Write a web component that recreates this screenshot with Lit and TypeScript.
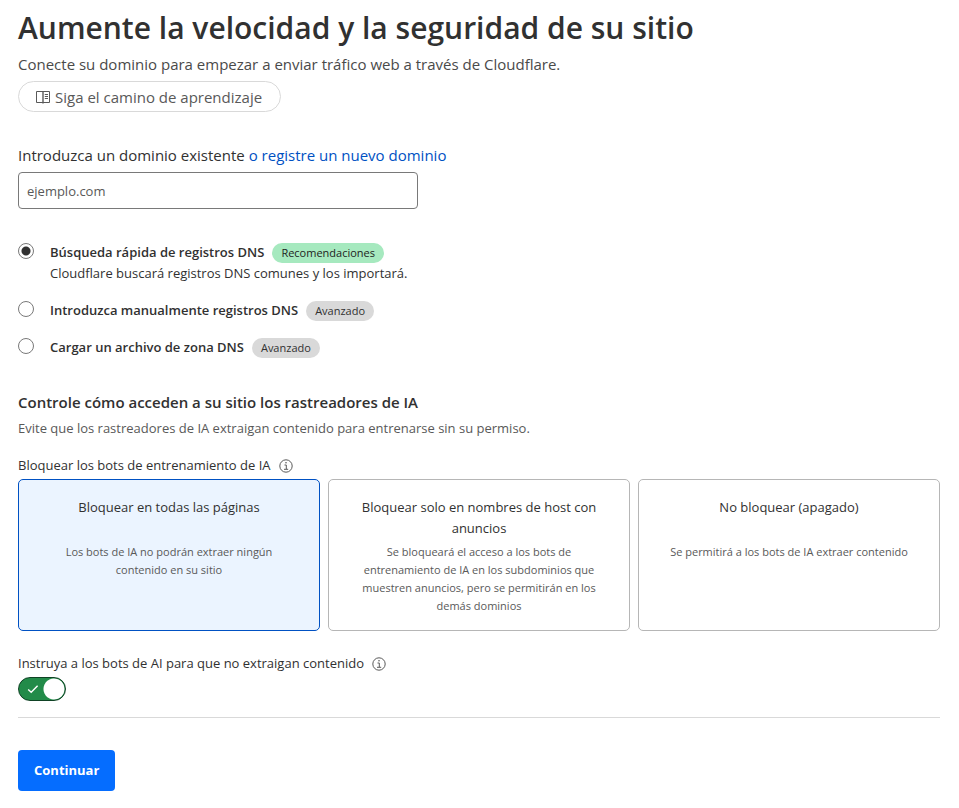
import { LitElement, html, css, svg, nothing } from "lit";
import { customElement, state } from "lit/decorators.js";

interface DnsOption {
  id: string;
  title: string;
  badge: string;
  tone: "success" | "neutral";
  description?: string;
}

interface BlockOption {
  id: string;
  title: string;
  description: string;
}

const DNS_OPTIONS: DnsOption[] = [
  {
    id: "scan",
    title: "Búsqueda rápida de registros DNS",
    badge: "Recomendaciones",
    tone: "success",
    description: "Cloudflare buscará registros DNS comunes y los importará.",
  },
  { id: "manual", title: "Introduzca manualmente registros DNS", badge: "Avanzado", tone: "neutral" },
  { id: "upload", title: "Cargar un archivo de zona DNS", badge: "Avanzado", tone: "neutral" },
];

const BLOCK_OPTIONS: BlockOption[] = [
  {
    id: "all",
    title: "Bloquear en todas las páginas",
    description: "Los bots de IA no podrán extraer ningún contenido en su sitio",
  },
  {
    id: "ads",
    title: "Bloquear solo en nombres de host con anuncios",
    description:
      "Se bloqueará el acceso a los bots de entrenamiento de IA en los subdominios que muestren anuncios, pero se permitirán en los demás dominios",
  },
  {
    id: "off",
    title: "No bloquear (apagado)",
    description: "Se permitirá a los bots de IA extraer contenido",
  },
];

const bookIcon = svg`
  <svg viewBox="0 0 14 14" width="14" height="14" fill="none" stroke="currentColor" aria-hidden="true">
    <path d="M0.5 1.5H13.5V12.5H0.5Z" />
    <path d="M7 1V13.6" stroke-width="1.4" />
    <path d="M8.8 4.5H12M8.8 6.5H12M8.8 8.5H12" />
  </svg>`;

const infoIcon = svg`
  <svg viewBox="0 0 14 14" width="14" height="14" fill="none" stroke="currentColor" aria-hidden="true">
    <circle cx="7" cy="7" r="6.2" />
    <path d="M5.5 6H7.3V10M5 10.3H9.2" />
    <circle cx="7" cy="3.8" r="0.8" fill="currentColor" stroke="none" />
  </svg>`;

@customElement("app-root")
export class AppRoot extends LitElement {
  @state() private dns = "scan";
  @state() private block = "all";
  @state() private instruct = true;

  static styles = css`
    :host {
      display: block;
      background: #fff;
      color: #313131;
      font: 13px/21px "Open Sans", "Noto Sans", sans-serif;
    }
    * {
      box-sizing: border-box;
    }
    .page {
      padding: 8px 19px 16px 18px;
    }
    h1,
    h2,
    p,
    fieldset {
      margin: 0;
      padding: 0;
      border: 0;
    }
    h1 {
      font-size: 30px;
      line-height: 40px;
      font-weight: 600;
    }
    .lead {
      margin-top: 4px;
      font-size: 15px;
      line-height: 24px;
      color: #4a4a4a;
    }
    .path {
      display: inline-flex;
      align-items: center;
      gap: 5px;
      height: 31px;
      margin-top: 5px;
      padding: 0 18px 0 17px;
      border: 1px solid #d9d9d9;
      border-radius: 16px;
      color: #595959;
      font-size: 15px;
      line-height: 24px;
      text-decoration: none;
    }
    svg {
      display: block;
      flex: none;
    }
    .domain {
      display: grid;
      gap: 5px;
      margin-top: 31px;
    }
    .domain-label {
      font-size: 15px;
      line-height: 24px;
    }
    .domain-label a {
      color: #0051c3;
      text-decoration: none;
    }
    .text-input {
      width: 100%;
      max-width: 400px;
      height: 37px;
      padding: 0 8px;
      border: 1px solid #797979;
      border-radius: 4px;
      background: #fff;
      color: inherit;
      font: inherit;
    }
    .text-input::placeholder {
      color: #595959;
      opacity: 1;
    }
    .options {
      display: grid;
      gap: 16px;
      margin-top: 33px;
    }
    .option {
      display: flex;
      gap: 16px;
    }
    .option input {
      appearance: none;
      flex: none;
      width: 16px;
      height: 16px;
      margin: 1px 0 0;
      border: 1px solid #797979;
      border-radius: 50%;
      background: #fff;
    }
    .option input:checked {
      background: radial-gradient(circle, #313131 4px, #fff 5px);
    }
    .option-head {
      display: flex;
      align-items: center;
      gap: 8px;
      font-weight: 600;
    }
    .badge {
      padding: 0 9px;
      border-radius: 10px;
      font-size: 11px;
      line-height: 20px;
      font-weight: 400;
    }
    .badge.success {
      background: #a6e9bf;
      color: #1d1d1d;
    }
    .badge.neutral {
      background: #d9d9d9;
      color: #313131;
    }
    h2 {
      margin-top: 32px;
      font-size: 15px;
      line-height: 24px;
      font-weight: 600;
    }
    .hint {
      margin-top: 4px;
      color: #595959;
    }
    .field-label {
      display: flex;
      align-items: center;
      gap: 8px;
      margin-bottom: 3px;
      padding: 0;
    }
    .bots {
      margin-top: 16px;
      min-width: 0;
    }
    .info {
      padding: 0;
      border: 0;
      background: none;
      color: #595959;
    }
    .cards {
      display: grid;
      grid-template-columns: repeat(3, 1fr);
      gap: 8px;
    }
    .card {
      position: relative;
      display: grid;
      grid-template-rows: minmax(42px, auto) 1fr;
      gap: 4px;
      padding: 17px 24px 15px;
      border: 1px solid #b6b6b6;
      border-radius: 5px;
      text-align: center;
    }
    .card:has(input:checked) {
      border-color: #0051c3;
      background: #ebf4ff;
    }
    .card input {
      appearance: none;
      position: absolute;
      inset: 0;
      margin: 0;
    }
    .card-text {
      font-size: 11px;
      line-height: 18px;
      color: #595959;
    }
    .instruct {
      margin-top: 22px;
    }
    .switch {
      display: grid;
      width: 48px;
      height: 24px;
      align-items: center;
    }
    .switch > * {
      grid-area: 1 / 1;
    }
    .switch input {
      appearance: none;
      width: 48px;
      height: 24px;
      margin: 0;
      border: 1px solid #797979;
      border-radius: 12px;
      background: #b6b6b6;
    }
    .switch input:checked {
      border-color: #0f4224;
      background: radial-gradient(circle 11px at 35px 11px, #fff 10px, #228b49 11px);
    }
    .tick {
      margin-left: 9px;
      color: #fff;
      pointer-events: none;
    }
    hr {
      height: 1px;
      margin: 16px 0 32px;
      border: 0;
      background: #d9d9d9;
    }
    .primary {
      height: 41px;
      padding: 0 16px;
      border: 0;
      border-radius: 4px;
      background: #056dff;
      color: #fff;
      font: inherit;
      font-weight: 700;
    }
  `;

  render() {
    return html`
      <main class="page">
        <h1>Aumente la velocidad y la seguridad de su sitio</h1>
        <p class="lead">Conecte su dominio para empezar a enviar tráfico web a través de Cloudflare.</p>
        <a class="path" href="#aprendizaje">${bookIcon}<span>Siga el camino de aprendizaje</span></a>

        <div class="domain">
          <div class="domain-label">
            <label for="domain">Introduzca un dominio existente</label>
            <a href="#registrar">o registre un nuevo dominio</a>
          </div>
          <input class="text-input" id="domain" type="text" placeholder="ejemplo.com" />
        </div>

        <div class="options" role="radiogroup" aria-label="Registros DNS">
          ${DNS_OPTIONS.map(
            (o) => html`
              <label class="option">
                <input
                  type="radio"
                  name="dns"
                  .checked=${this.dns === o.id}
                  @change=${() => (this.dns = o.id)}
                />
                <span>
                  <span class="option-head">
                    <span>${o.title}</span><span class="badge ${o.tone}">${o.badge}</span>
                  </span>
                  ${o.description ? html`<span>${o.description}</span>` : nothing}
                </span>
              </label>
            `
          )}
        </div>

        <h2>Controle cómo acceden a su sitio los rastreadores de IA</h2>
        <p class="hint">Evite que los rastreadores de IA extraigan contenido para entrenarse sin su permiso.</p>

        <fieldset class="bots">
          <legend class="field-label">
            <span>Bloquear los bots de entrenamiento de IA</span>
            <button class="info" type="button" aria-label="Más información">${infoIcon}</button>
          </legend>
          <div class="cards">
            ${BLOCK_OPTIONS.map(
              (o) => html`
                <label class="card">
                  <input
                    type="radio"
                    name="block"
                    .checked=${this.block === o.id}
                    @change=${() => (this.block = o.id)}
                  />
                  <span>${o.title}</span>
                  <span class="card-text">${o.description}</span>
                </label>
              `
            )}
          </div>
        </fieldset>

        <div class="instruct">
          <div class="field-label">
            <label for="instruct">Instruya a los bots de AI para que no extraigan contenido</label>
            <button class="info" type="button" aria-label="Más información">${infoIcon}</button>
          </div>
          <div class="switch">
            <input
              id="instruct"
              type="checkbox"
              role="switch"
              .checked=${this.instruct}
              @change=${(e: Event) => (this.instruct = (e.target as HTMLInputElement).checked)}
            />
            ${this.instruct
              ? svg`<svg class="tick" viewBox="0 0 12 12" width="12" height="12" fill="none" stroke="currentColor" stroke-width="1.4" aria-hidden="true"><path d="M1.2 6.5L4.2 9.3L10.6 2.8" /></svg>`
              : nothing}
          </div>
        </div>

        <hr />
        <button class="primary" type="button">Continuar</button>
      </main>
    `;
  }
}
